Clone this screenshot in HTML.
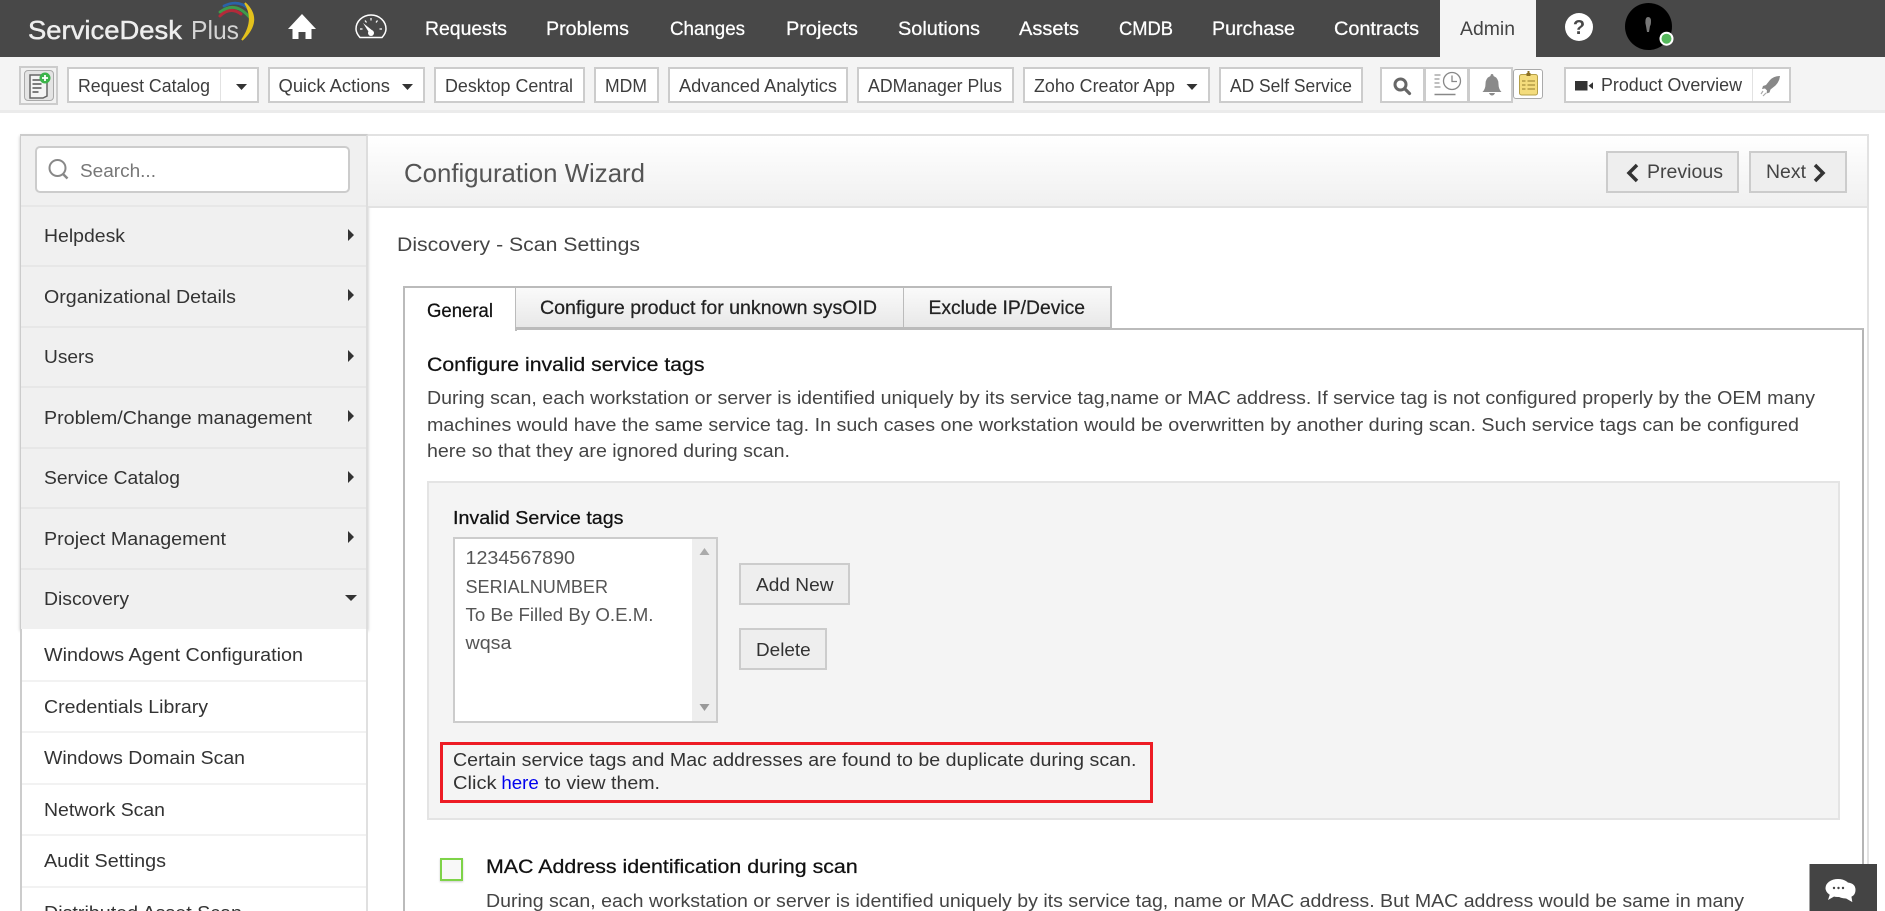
<!DOCTYPE html>
<html lang="en"><head><meta charset="utf-8"><title>Configuration Wizard</title>
<style>
html,body{margin:0;padding:0;width:1885px;height:911px;overflow:hidden;background:#fff}
.b{position:absolute;box-sizing:border-box}
.tb{top:67px;height:36px;background:#fff;border:2px solid #ccc}
.btn{background:#eee;border:2px solid #ccc}
svg{position:absolute;left:0;top:0}
text{font-family:"Liberation Sans",sans-serif;font-size:18px;fill:#444}
.nav{font-size:19px;fill:#fff;stroke:#fff;stroke-width:.25}
.tbt{fill:#3d3d3d}
.m{fill:#333}
.h{font-size:19px;fill:#222;stroke:#222;stroke-width:.25}
.p{fill:#444}
.l{fill:#555}
</style></head><body>
<!-- top bar -->
<div class="b" style="left:0;top:0;width:1885px;height:57px;background:#484848"></div>
<div class="b" style="left:1440px;top:0;width:96px;height:57px;background:#f4f4f4"></div>
<!-- toolbar -->
<div class="b" style="left:0;top:57px;width:1885px;height:53px;background:#f4f4f4"></div>
<div class="b" style="left:0;top:110px;width:1885px;height:3px;background:#ebebeb"></div>
<div class="b" style="left:19px;top:66px;width:39px;height:39px;background:#f2f2f2;border:2px solid #ccc"></div>
<div class="b" style="left:24px;top:70px;width:30px;height:31px;background:#e4e4e4;border:1px solid #aaa;border-radius:4px"></div>
<div class="b tb" style="left:67px;width:192px"></div>
<div class="b" style="left:220px;top:69px;width:1px;height:32px;background:#e2e2e2"></div>
<div class="b tb" style="left:268px;width:157px"></div>
<div class="b tb" style="left:434px;width:151px"></div>
<div class="b tb" style="left:594px;width:65px"></div>
<div class="b tb" style="left:668px;width:180px"></div>
<div class="b tb" style="left:857px;width:157px"></div>
<div class="b tb" style="left:1023px;width:187px"></div>
<div class="b tb" style="left:1219px;width:144px"></div>
<div class="b tb" style="left:1380px;width:133px"></div>
<div class="b" style="left:1423px;top:67px;width:3px;height:36px;background:#ccc"></div>
<div class="b" style="left:1467px;top:67px;width:3px;height:36px;background:#ccc"></div>
<div class="b" style="left:1513px;top:69px;width:30px;height:30px;background:#fff;border:1px solid #aaa;border-radius:3px"></div>
<div class="b tb" style="left:1564px;width:227px"></div>
<div class="b" style="left:1752px;top:69px;width:1px;height:32px;background:#e2e2e2"></div>
<!-- sidebar -->
<div class="b" style="left:20px;top:134px;width:348px;height:495px;background:#f0f0f0;border-top:2px solid #ccc;border-left:1px solid #ccc;border-right:2px solid #ddd;box-shadow:0 2px 3px rgba(0,0,0,.25)"></div>
<div class="b" style="left:35px;top:146px;width:315px;height:47px;background:#fff;border:2px solid #ccc;border-radius:5px"></div>
<div class="b" style="left:21px;top:205px;width:345px;height:2px;background:#e7e7e7"></div>
<div class="b" style="left:21px;top:265px;width:345px;height:2px;background:#e7e7e7"></div>
<div class="b" style="left:21px;top:326px;width:345px;height:2px;background:#e7e7e7"></div>
<div class="b" style="left:21px;top:386px;width:345px;height:2px;background:#e7e7e7"></div>
<div class="b" style="left:21px;top:447px;width:345px;height:2px;background:#e7e7e7"></div>
<div class="b" style="left:21px;top:507px;width:345px;height:2px;background:#e7e7e7"></div>
<div class="b" style="left:21px;top:568px;width:345px;height:2px;background:#e7e7e7"></div>
<div class="b" style="left:20px;top:629px;width:348px;height:282px;background:#fff;border-left:2px solid #ccc;border-right:2px solid #e0e0e0"></div>
<div class="b" style="left:22px;top:680px;width:344px;height:2px;background:#f2f2f2"></div>
<div class="b" style="left:22px;top:731px;width:344px;height:2px;background:#f2f2f2"></div>
<div class="b" style="left:22px;top:783px;width:344px;height:2px;background:#f2f2f2"></div>
<div class="b" style="left:22px;top:834px;width:344px;height:2px;background:#f2f2f2"></div>
<div class="b" style="left:22px;top:886px;width:344px;height:2px;background:#f2f2f2"></div>
<!-- right panel -->
<div class="b" style="left:368px;top:134px;width:1501px;height:777px;border-right:2px solid #e2e2e2"></div>
<div class="b" style="left:368px;top:134px;width:1501px;height:74px;background:linear-gradient(#fff,#f0f0f0);border-top:2px solid #e2e2e2;border-right:2px solid #e2e2e2;border-bottom:2px solid #e2e2e2"></div>
<div class="b btn" style="left:1606px;top:151px;width:133px;height:42px"></div>
<div class="b btn" style="left:1749px;top:151px;width:98px;height:42px"></div>
<!-- tabs -->
<div class="b" style="left:403px;top:328px;width:1461px;height:583px;border-left:2px solid #bbb;border-right:2px solid #b5b5b5;border-top:2px solid #bbb"></div>
<div class="b" style="left:403px;top:286px;width:114px;height:45px;background:#fff;border:2px solid #bbb;border-bottom:0"></div>
<div class="b" style="left:516px;top:286px;width:389px;height:44px;background:linear-gradient(#fafafa,#e8e8e8);border:2px solid #bbb;border-bottom-width:3px;border-left:0"></div>
<div class="b" style="left:904px;top:286px;width:208px;height:44px;background:linear-gradient(#fafafa,#e8e8e8);border:2px solid #bbb;border-bottom-width:3px;border-left:0"></div>
<!-- gray box -->
<div class="b" style="left:427px;top:481px;width:1413px;height:339px;background:#f4f4f4;border:2px solid #e4e4e4"></div>
<div class="b" style="left:453px;top:537px;width:265px;height:186px;background:#fff;border:2px solid #ccc"></div>
<div class="b" style="left:692px;top:539px;width:24px;height:182px;background:#eee"></div>
<div class="b btn" style="left:739px;top:563px;width:111px;height:42px"></div>
<div class="b btn" style="left:739px;top:628px;width:88px;height:42px"></div>
<div class="b" style="left:440px;top:742px;width:713px;height:61px;border:3px solid #ed1c24"></div>
<div class="b" style="left:440px;top:858px;width:23px;height:23px;background:#f8f8f8;border:2px solid #7ed348;box-shadow:0 1px 2px rgba(0,0,0,.2)"></div>
<svg width="1885" height="911" viewBox="0 0 1885 911">
<!-- logo -->
<text x="28" y="39" style="font-size:26px;fill:#eee;stroke:#eee;stroke-width:.45" textLength="154" lengthAdjust="spacingAndGlyphs">ServiceDesk</text>
<text x="191" y="39" style="font-size:26px;fill:#d4d4d4" textLength="48" lengthAdjust="spacingAndGlyphs">Plus</text>
<g fill="none" stroke-linecap="round">
<path d="M220 16Q230 6 241 14" stroke="#b32a3a" stroke-width="3"/>
<path d="M220 12Q236 0 251 19" stroke="#3f9a4a" stroke-width="2.800"/>
<path d="M224 6Q238 -1 249 9" stroke="#2b62a8" stroke-width="2.800"/>
</g>
<path d="M245 3Q263 20 242 40Q256 20 245 3Z" fill="#e3c11c" stroke="#e3c11c" stroke-width="1.800"/>
<!-- home -->
<path d="M302 14L288 29H292.500V39H298.500V32H305.500V39H311.500V29H316Z" fill="#fff"/>
<!-- gauge -->
<g fill="none" stroke="#fff" stroke-width="1.500">
<path d="M360 37.500Q356 33 356 29A15 14 0 0 1 386 29Q386 33 382 37.500Z"/>
<path d="M365 20.500l1.500 2M377.500 20.500l-1.500 2M360 29h2.500M382 29h-2.500M371 18v2.500" stroke-width="1.200"/>
</g>
<path d="M363 23L373 31L370 34Z" fill="#fff"/>
<circle cx="371" cy="33" r="3" fill="#fff"/>
<!-- nav -->
<text class="nav" x="425" y="35" textLength="82" lengthAdjust="spacingAndGlyphs">Requests</text>
<text class="nav" x="546" y="35" textLength="83" lengthAdjust="spacingAndGlyphs">Problems</text>
<text class="nav" x="670" y="35" textLength="75" lengthAdjust="spacingAndGlyphs">Changes</text>
<text class="nav" x="786" y="35" textLength="72" lengthAdjust="spacingAndGlyphs">Projects</text>
<text class="nav" x="898" y="35" textLength="82" lengthAdjust="spacingAndGlyphs">Solutions</text>
<text class="nav" x="1019" y="35" textLength="60" lengthAdjust="spacingAndGlyphs">Assets</text>
<text class="nav" x="1119" y="35" textLength="54" lengthAdjust="spacingAndGlyphs">CMDB</text>
<text class="nav" x="1212" y="35" textLength="83" lengthAdjust="spacingAndGlyphs">Purchase</text>
<text class="nav" x="1334" y="35" textLength="85" lengthAdjust="spacingAndGlyphs">Contracts</text>
<text x="1460" y="35" style="font-size:19px;fill:#444" textLength="55" lengthAdjust="spacingAndGlyphs">Admin</text>
<!-- help & avatar -->
<circle cx="1579" cy="27" r="14" fill="#fff"/>
<text x="1579" y="34" text-anchor="middle" style="font-size:20px;font-weight:bold;fill:#484848">?</text>
<circle cx="1648.500" cy="26.500" r="23.500" fill="#000"/>
<path d="M1648 17q3 0 3 4t-1 5l-1 6h-2l-1-6q-1-3-.5-6t2.500-3Z" fill="#777"/>
<circle cx="1666.500" cy="38.700" r="7" fill="#fff"/>
<circle cx="1666.500" cy="38.700" r="5" fill="#55b85c"/>
<!-- new request icon -->
<path d="M30 75h14l3 3v18l-4 2H30Z" fill="#f4f4f4" stroke="#666" stroke-width="1.500"/>
<path d="M32.500 80h8M32.500 84h9M32.500 88h9M32.500 92h6" stroke="#555" stroke-width="1.500"/>
<circle cx="45" cy="78" r="5.500" fill="#3cb44a"/>
<path d="M42 78h6M45 75v6" stroke="#fff" stroke-width="1.800"/>
<!-- toolbar text -->
<text class="tbt" x="78" y="92" textLength="132" lengthAdjust="spacingAndGlyphs">Request Catalog</text>
<path d="M236 84h11l-5.500 6Z" fill="#333"/>
<text class="tbt" x="278.500" y="92" textLength="111.500" lengthAdjust="spacingAndGlyphs">Quick Actions</text>
<path d="M402 84h11l-5.500 6Z" fill="#333"/>
<text class="tbt" x="445" y="92" textLength="128" lengthAdjust="spacingAndGlyphs">Desktop Central</text>
<text class="tbt" x="605" y="92" textLength="42" lengthAdjust="spacingAndGlyphs">MDM</text>
<text class="tbt" x="679" y="92" textLength="158" lengthAdjust="spacingAndGlyphs">Advanced Analytics</text>
<text class="tbt" x="868" y="92" textLength="134" lengthAdjust="spacingAndGlyphs">ADManager Plus</text>
<text class="tbt" x="1034" y="92" textLength="141" lengthAdjust="spacingAndGlyphs">Zoho Creator App</text>
<path d="M1186.500 84h11l-5.500 6Z" fill="#333"/>
<text class="tbt" x="1230" y="92" textLength="122" lengthAdjust="spacingAndGlyphs">AD Self Service</text>
<!-- toolbar icons -->
<circle cx="1400.500" cy="84.500" r="5.500" fill="none" stroke="#666" stroke-width="3"/>
<path d="M1404.500 88.500l5 5" stroke="#666" stroke-width="3.200" stroke-linecap="round"/>
<circle cx="1452" cy="81" r="8.500" fill="none" stroke="#888" stroke-width="1.300"/>
<path d="M1452 75.500V81.500H1457" fill="none" stroke="#888" stroke-width="1.300"/>
<path d="M1434.500 75h6M1434.500 79h5M1434.500 83h5M1434.500 87h6" stroke="#999" stroke-width="1.200"/>
<path d="M1434.500 94.500h21" stroke="#888" stroke-width="1.500"/>
<path d="M1492 74q1.500 0 1.500 2q5 2 5 8q0 5 3 8h-19q3-3 3-8q0-6 5-8q0-2 1.500-2Z" fill="#8a8a8a"/>
<path d="M1489 93h6q-1 2.500-3 2.500t-3-2.500Z" fill="#8a8a8a"/>
<rect x="1519.500" y="74.500" width="18" height="20.500" rx="2" fill="#f4dc7c" stroke="#b5a049" stroke-width="1"/>
<path d="M1526.500 76h4v-3h-1v-2h-2v2h-1Z" fill="#8b6f22"/>
<path d="M1522 81h3.500M1527.500 81h7.500M1522 85h3.500M1527.500 85h7.500M1522 89h3.500M1527.500 89h7.500" stroke="#a78f3c" stroke-width="1.200"/>
<rect x="1575" y="81" width="12.500" height="9.500" fill="#333"/>
<path d="M1588.500 85.700l4.500-3.500v7Z" fill="#333"/>
<text class="tbt" x="1601" y="91" textLength="141" lengthAdjust="spacingAndGlyphs">Product Overview</text>
<path d="M1780 76q-6 0-10 4l-4 5l-3 1l-1 3l3-.5l2 2l-.5 3l3-1l1-3l5-4q4-4 4.500-9.500Z" fill="#888"/>
<path d="M1763 91l-2 3M1766 93l-3 3" stroke="#aaa" stroke-width="1.200"/>
<!-- sidebar -->
<circle cx="57.500" cy="168" r="8" fill="none" stroke="#888" stroke-width="2"/>
<path d="M63 174l4.500 4.500" stroke="#888" stroke-width="2.500"/>
<text x="80" y="177" style="fill:#777" textLength="76" lengthAdjust="spacingAndGlyphs">Search...</text>
<text class="m" x="44" y="242" textLength="81" lengthAdjust="spacingAndGlyphs">Helpdesk</text>
<text class="m" x="44" y="303" textLength="192" lengthAdjust="spacingAndGlyphs">Organizational Details</text>
<text class="m" x="44" y="363" textLength="50" lengthAdjust="spacingAndGlyphs">Users</text>
<text class="m" x="44" y="424" textLength="268" lengthAdjust="spacingAndGlyphs">Problem/Change management</text>
<text class="m" x="44" y="484" textLength="136" lengthAdjust="spacingAndGlyphs">Service Catalog</text>
<text class="m" x="44" y="545" textLength="182" lengthAdjust="spacingAndGlyphs">Project Management</text>
<text class="m" x="44" y="605" textLength="85" lengthAdjust="spacingAndGlyphs">Discovery</text>
<text class="m" x="44" y="661" textLength="259" lengthAdjust="spacingAndGlyphs">Windows Agent Configuration</text>
<text class="m" x="44" y="713" textLength="164" lengthAdjust="spacingAndGlyphs">Credentials Library</text>
<text class="m" x="44" y="764" textLength="201" lengthAdjust="spacingAndGlyphs">Windows Domain Scan</text>
<text class="m" x="44" y="816" textLength="121" lengthAdjust="spacingAndGlyphs">Network Scan</text>
<text class="m" x="44" y="867" textLength="122" lengthAdjust="spacingAndGlyphs">Audit Settings</text>
<text class="m" x="44" y="919" textLength="198" lengthAdjust="spacingAndGlyphs">Distributed Asset Scan</text>
<path d="M348 229l6 6l-6 6ZM348 289l6 6l-6 6ZM348 350l6 6l-6 6ZM348 410l6 6l-6 6ZM348 471l6 6l-6 6ZM348 531l6 6l-6 6Z" fill="#333"/>
<path d="M345 595h12l-6 6Z" fill="#333"/>
<!-- header -->
<text x="404" y="182" style="font-size:26px;fill:#555" textLength="241" lengthAdjust="spacingAndGlyphs">Configuration Wizard</text>
<path d="M1637 165l-8 8l8 8" fill="none" stroke="#333" stroke-width="3.500"/>
<text x="1647" y="178" style="font-size:19px;fill:#444" textLength="76" lengthAdjust="spacingAndGlyphs">Previous</text>
<text x="1766" y="178" style="font-size:19px;fill:#444" textLength="40" lengthAdjust="spacingAndGlyphs">Next</text>
<path d="M1815 165l8 8l-8 8" fill="none" stroke="#333" stroke-width="3.500"/>
<text x="397" y="251" style="font-size:19px;fill:#444" textLength="243" lengthAdjust="spacingAndGlyphs">Discovery - Scan Settings</text>
<!-- tabs -->
<text class="h" x="427" y="317" style="fill:#111;stroke:#111" textLength="66" lengthAdjust="spacingAndGlyphs">General</text>
<text class="h" x="540" y="314" textLength="337" lengthAdjust="spacingAndGlyphs">Configure product for unknown sysOID</text>
<text class="h" x="928.500" y="314" textLength="156.500" lengthAdjust="spacingAndGlyphs">Exclude IP/Device</text>
<!-- content -->
<text class="h" x="427" y="371" style="fill:#111;stroke:#111" textLength="277.500" lengthAdjust="spacingAndGlyphs">Configure invalid service tags</text>
<text class="p" x="427" y="404" textLength="1388" lengthAdjust="spacingAndGlyphs">During scan, each workstation or server is identified uniquely by its service tag,name or MAC address. If service tag is not configured properly by the OEM many</text>
<text class="p" x="427" y="431" textLength="1372" lengthAdjust="spacingAndGlyphs">machines would have the same service tag. In such cases one workstation would be overwritten by another during scan. Such service tags can be configured</text>
<text class="p" x="427" y="457" textLength="363" lengthAdjust="spacingAndGlyphs">here so that they are ignored during scan.</text>
<text class="h" x="453" y="524" style="font-size:18px;fill:#111;stroke:#111" textLength="170.500" lengthAdjust="spacingAndGlyphs">Invalid Service tags</text>
<text class="l" x="465.500" y="564" textLength="109.500" lengthAdjust="spacingAndGlyphs">1234567890</text>
<text class="l" x="465.500" y="593" textLength="142.500" lengthAdjust="spacingAndGlyphs">SERIALNUMBER</text>
<text class="l" x="465.500" y="621" textLength="188" lengthAdjust="spacingAndGlyphs">To Be Filled By O.E.M.</text>
<text class="l" x="465.500" y="649" textLength="46" lengthAdjust="spacingAndGlyphs">wqsa</text>
<path d="M699.500 555l5-7l5 7Z" fill="#aaa"/>
<path d="M699.500 704l5 7l5-7Z" fill="#999"/>
<text x="756" y="591" style="fill:#333" textLength="77.500" lengthAdjust="spacingAndGlyphs">Add New</text>
<text x="756" y="656" style="fill:#333" textLength="54.700" lengthAdjust="spacingAndGlyphs">Delete</text>
<text x="453" y="766" style="fill:#333" textLength="683.400" lengthAdjust="spacingAndGlyphs">Certain service tags and Mac addresses are found to be duplicate during scan.</text>
<text x="453" y="789" style="fill:#333" textLength="43.600" lengthAdjust="spacingAndGlyphs">Click</text>
<text x="501.400" y="789" style="fill:#00e" textLength="37.400" lengthAdjust="spacingAndGlyphs">here</text>
<text x="544.600" y="789" style="fill:#333" textLength="115.400" lengthAdjust="spacingAndGlyphs">to view them.</text>
<text class="h" x="486" y="873" style="fill:#111;stroke:#111" textLength="371.700" lengthAdjust="spacingAndGlyphs">MAC Address identification during scan</text>
<text class="p" x="486" y="907" textLength="1258" lengthAdjust="spacingAndGlyphs">During scan, each workstation or server is identified uniquely by its service tag, name or MAC address. But MAC address would be same in many</text>
<!-- chat widget -->
<rect x="1809.500" y="864" width="67.500" height="47" fill="#444"/>
<path d="M1848 882q8 1 8 8q0 5-4 7l1 6l-7-4q-6 0-9-3Z" fill="#fff" stroke="#444" stroke-width="1"/>
<ellipse cx="1838" cy="888" rx="12.500" ry="9" fill="#fff"/>
<path d="M1830 894l-2 6l7-4Z" fill="#fff"/>
<circle cx="1834" cy="888" r="1.200" fill="#444"/><circle cx="1838.500" cy="888" r="1.200" fill="#444"/><circle cx="1843" cy="888" r="1.200" fill="#444"/>
</svg>
</body></html>
